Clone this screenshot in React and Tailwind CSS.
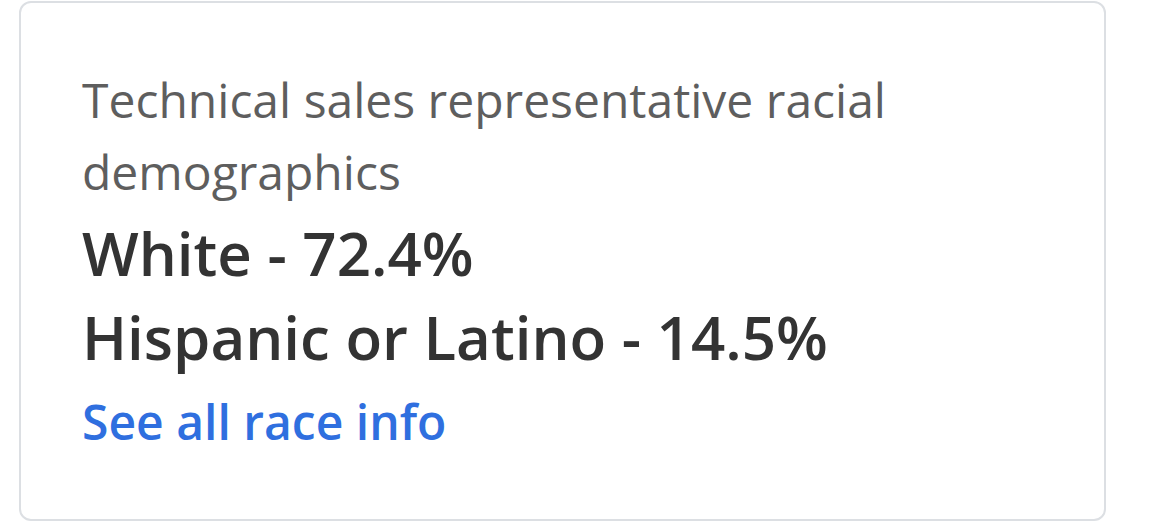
export default function App() {
  return (
    <div className="w-[1152px] h-[525px] bg-white pl-[19px] pr-[46px] pt-[1px]" style={{ fontFamily: '"Open Sans", sans-serif' }}>
      <div className="h-[520px] rounded-[12px] border-2 border-[#dcdfe3] pl-[61px] pr-[40px] pt-[61px]">
        <p className="text-[48px] leading-[72px] text-[#5e5e5e]">
          Technical sales representative racial demographics
        </p>
        <p className="mt-[3px] text-[60px] leading-[84px] font-semibold text-[#333333]">White - 72.4%</p>
        <p className="text-[60px] leading-[84px] font-semibold text-[#333333]">Hispanic or Latino - 14.5%</p>
        <a href="#" className="mt-[13px] block w-fit text-[48px] leading-[60px] font-semibold text-[#2f6fdf]">
          See all race info
        </a>
      </div>
    </div>
  )
}
